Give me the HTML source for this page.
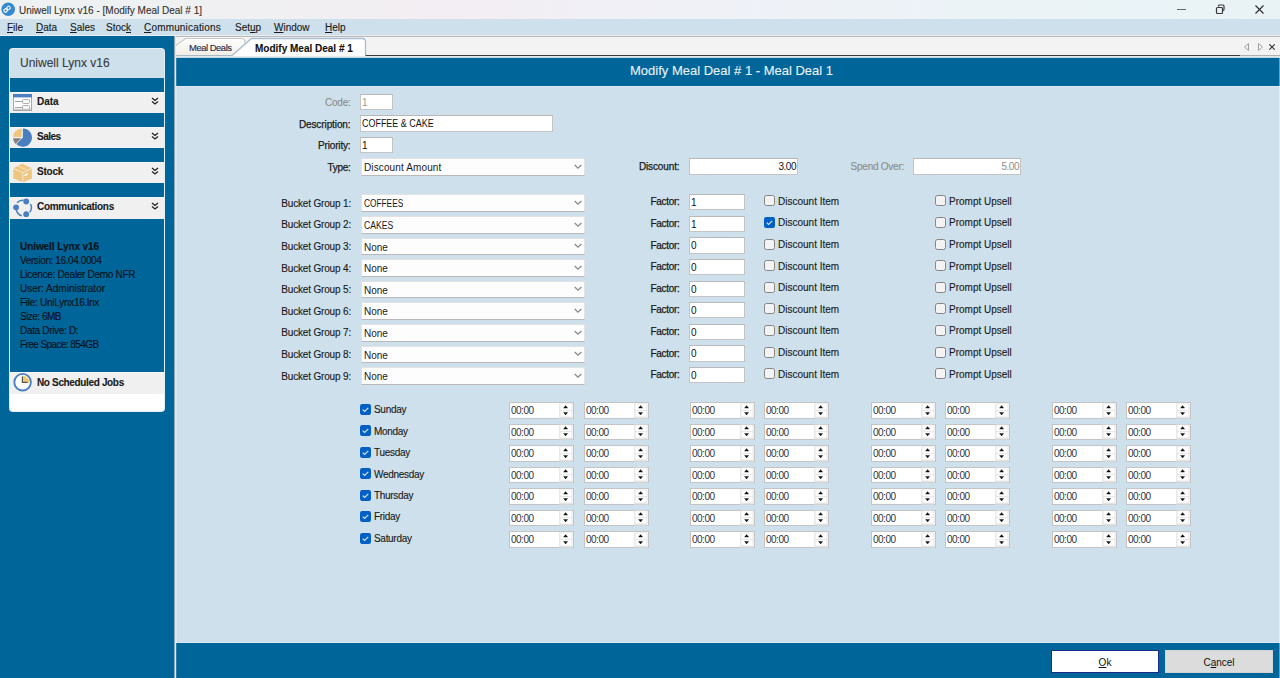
<!DOCTYPE html>
<html><head><meta charset="utf-8">
<style>
*{box-sizing:border-box;margin:0;padding:0}
html,body{width:1280px;height:678px;overflow:hidden;background:#006699;font-family:"Liberation Sans",sans-serif;font-size:10px;color:#1a1a1a}
.a{position:absolute}
.t{position:absolute;white-space:nowrap;line-height:12px;-webkit-text-stroke:0.12px currentColor}
#title{left:0;top:0;width:1280px;height:19px;background:linear-gradient(90deg,#edf2f1 0%,#f1eff2 25%,#f3eef3 35%,#eff1f7 55%,#ebf3f7 80%,#e9f3f6 100%)}
#menu{left:0;top:19px;width:1280px;height:17px;background:#cde0eb;border-bottom:1px solid #e6eef3}
.u{text-decoration:underline;text-underline-offset:1px}
#side{left:0;top:36px;width:175px;height:642px;background:#006699}
#main{left:176px;top:36px;width:1104px;height:642px;background:#cde0eb}
.b{font-weight:bold}
.hd{position:absolute;left:0;width:155px;height:21px;background:#f0f0f0;border-top:1px solid #f7f5f3}
.info{position:absolute;white-space:nowrap;line-height:14.05px;color:#08121c;font-size:10px;letter-spacing:-0.38px;-webkit-text-stroke:0.15px #08121c}
.info .b{letter-spacing:-0.1px}
.lr{text-align:right}
.sx{display:inline-block;transform-origin:0 50%}
.sb{-webkit-text-stroke:0.25px currentColor}
.tb{position:absolute;background:#fff;border:1px solid #c4c4c4;border-top-color:#b8b8b8;white-space:nowrap;overflow:hidden;line-height:16px;padding:0 1px}
.cb{position:absolute;background:#fdfdfd;border:1px solid #e2e2e2;border-bottom:1px solid #b9b9b9;white-space:nowrap;line-height:17.5px;padding:0 2px}
.sp{position:absolute;width:65px;height:16.5px;background:#fff;border:1px solid #c4c4c4;line-height:15.6px;padding-left:1px;color:#2c3440;letter-spacing:-0.5px}
.sb1{position:absolute;left:50px;top:0.5px;width:13px;height:7px;background:#f0f0f0}
.sb2{position:absolute;left:50px;top:7.5px;width:13px;height:7px;background:#f0f0f0}
.btn{position:absolute;text-align:center;line-height:23px;color:#111}
.btn u{text-underline-offset:1px}
</style></head><body>
<div id="title" class="a">
  <svg class="a" style="left:1px;top:2px" width="15" height="15" viewBox="0 0 15 15">
    <circle cx="7.2" cy="7.3" r="6.8" fill="#3489d2"/>
    <g fill="none" stroke="#fff" stroke-width="1.1">
      <rect x="3" y="7" width="3.2" height="3" rx="1" transform="rotate(-40 4.6 8.5)"/>
      <rect x="6" y="4.4" width="3.2" height="3" rx="1" transform="rotate(-40 7.6 5.9)"/>
    </g>
  </svg>
  <div class="t" style="left:19px;top:5px;font-size:10px;color:#333">Uniwell Lynx v16 - [Modify Meal Deal # 1]</div>
  <div class="a" style="left:1177px;top:8.5px;width:8.5px;height:1.4px;background:#6b6b6b"></div>
  <svg class="a" style="left:1215px;top:4px" width="10" height="10" viewBox="0 0 10 10">
    <rect x="1.5" y="3.5" width="6" height="6" rx="1" fill="none" stroke="#3a3a3a" stroke-width="1.2"/>
    <path d="M3.5 2.5 V2 a1 1 0 0 1 1 -1 H8 a1 1 0 0 1 1 1 V5.5 a1 1 0 0 1 -1 1 h-.5" fill="none" stroke="#3a3a3a" stroke-width="1.2"/>
  </svg>
  <svg class="a" style="left:1255px;top:5px" width="9" height="9" viewBox="0 0 9 9">
    <path d="M0.5 0.5 L8.5 8.5 M8.5 0.5 L0.5 8.5" stroke="#2a2a2a" stroke-width="1.1"/>
  </svg>
</div>
<div id="menu" class="a">
  <div class="t" style="left:7px;top:3px"><span class="u">F</span>ile</div>
  <div class="t" style="left:36px;top:3px"><span class="u">D</span>ata</div>
  <div class="t" style="left:70px;top:3px"><span class="u">S</span>ales</div>
  <div class="t" style="left:106px;top:3px">Stoc<span class="u">k</span></div>
  <div class="t" style="left:144px;top:3px;letter-spacing:0.17px"><span class="u">C</span>ommunications</div>
  <div class="t" style="left:235px;top:3px">Set<span class="u">u</span>p</div>
  <div class="t" style="left:274px;top:3px"><span class="u">W</span>indow</div>
  <div class="t" style="left:325px;top:3px"><span class="u">H</span>elp</div>
</div>
<div id="side" class="a">
 <div class="a" style="left:9px;top:12px;width:156px;height:364px;background:#e3eef5;border-radius:4px"></div>
 <div class="a" style="left:10px;top:13px;width:154px;height:362px;background:#fff;border-radius:3px;overflow:hidden">
  <div class="a" style="left:0;top:0;width:155px;height:29px;background:#cde0eb"></div>
  <div class="t" style="left:10px;top:7px;font-size:12px;line-height:14px;color:#3c3c3c">Uniwell Lynx v16</div>
  <div class="a" style="left:0;top:29px;width:155px;height:14px;background:#006699"></div>
  <div class="hd" style="top:43px"></div>
  <div class="a" style="left:0;top:64px;width:155px;height:14px;background:#006699"></div>
  <div class="hd" style="top:78px"></div>
  <div class="a" style="left:0;top:99px;width:155px;height:14px;background:#006699"></div>
  <div class="hd" style="top:113px"></div>
  <div class="a" style="left:0;top:134px;width:155px;height:14px;background:#006699"></div>
  <div class="hd" style="top:148px;height:22px"></div>
  <div class="a" style="left:0;top:170px;width:155px;height:153px;background:#006699"></div>
  <div class="hd" style="top:323px;height:21.5px"></div>
 </div>
 <div class="t b" style="left:37px;top:60px">Data</div>
 <div class="t b" style="left:37px;top:95px;letter-spacing:-0.5px">Sales</div>
 <div class="t b" style="left:37px;top:130px;letter-spacing:-0.2px">Stock</div>
 <div class="t b" style="left:37px;top:165px;letter-spacing:-0.3px">Communications</div>
 <div class="t b" style="left:37px;top:340.5px;letter-spacing:-0.35px">No Scheduled Jobs</div>
 <svg class="a chev" style="left:151px;top:61px" width="8" height="8" viewBox="0 0 8 8"><path d="M1 1 L4 3.5 L7 1 M1 4.5 L4 7 L7 4.5" fill="none" stroke="#222" stroke-width="1.3"/></svg>
 <svg class="a chev" style="left:151px;top:96px" width="8" height="8" viewBox="0 0 8 8"><path d="M1 1 L4 3.5 L7 1 M1 4.5 L4 7 L7 4.5" fill="none" stroke="#222" stroke-width="1.3"/></svg>
 <svg class="a chev" style="left:151px;top:131px" width="8" height="8" viewBox="0 0 8 8"><path d="M1 1 L4 3.5 L7 1 M1 4.5 L4 7 L7 4.5" fill="none" stroke="#222" stroke-width="1.3"/></svg>
 <svg class="a chev" style="left:151px;top:166px" width="8" height="8" viewBox="0 0 8 8"><path d="M1 1 L4 3.5 L7 1 M1 4.5 L4 7 L7 4.5" fill="none" stroke="#222" stroke-width="1.3"/></svg>
 <!-- data icon -->
 <svg class="a" style="left:13px;top:58px" width="19" height="17" viewBox="0 0 19 17">
  <rect x="0.5" y="0.5" width="18" height="16" fill="#fff" stroke="#a8a8a8"/>
  <rect x="0" y="0" width="19" height="3.4" fill="#4a7fc0"/>
  <path d="M2 7.5 H9 M2 13.5 H9" stroke="#9c9c9c" stroke-width="0.9"/>
  <rect x="9.5" y="5.6" width="7" height="3.8" rx="1" fill="#fff" stroke="#a8a8a8"/>
  <rect x="9.5" y="11.6" width="7" height="3.8" rx="1" fill="#fff" stroke="#a8a8a8"/>
  <rect x="1" y="14.8" width="17" height="1.2" fill="#c4c4c4"/>
 </svg>
 <!-- sales pie -->
 <svg class="a" style="left:12px;top:91px" width="21" height="21" viewBox="0 0 21 21">
  <path d="M10.9 1.5 A9.1 9.1 0 1 1 4.4 17.0 L10.9 10.6 Z" fill="#4a7fbf"/>
  <path d="M9.4 11.2 H1.1 A8.4 8.4 0 0 0 3.5 16.9 Z" fill="#808080"/>
  <path d="M9.7 10.1 V1.5 A8.6 8.6 0 0 0 1.1 10.1 Z" fill="#eec77a"/>
 </svg>
 <!-- stock box -->
 <svg class="a" style="left:13px;top:127px" width="20" height="20" viewBox="0 0 20 20">
  <path d="M0.4 5.2 L9.2 0.8 L18.8 5.2 L9.8 9.2 Z" fill="#efc680"/>
  <path d="M0.3 6 L9.4 9.8 V19.2 L0.3 15.2 Z" fill="#efc680"/>
  <path d="M10.2 9.8 L18.9 6 V15.6 L10.2 19.6 Z" fill="#efc680"/>
  <path d="M4.6 2.9 L14.2 7.2" stroke="#f7e4c2" stroke-width="0.9"/>
  <path d="M11.6 11.2 L14.6 9.9 V11.9 L11.6 13.2 Z" fill="#fff"/>
 </svg>
 <!-- comms -->
 <svg class="a" style="left:13px;top:162px" width="20" height="20" viewBox="0 0 20 20">
  <g fill="none" stroke="#4a7fbf" stroke-width="1.5">
   <path d="M4.0 4.8 A8 8 0 0 1 10.5 2.3"/>
   <path d="M17.5 6 A8 8 0 0 1 16.7 14.4"/>
   <path d="M3.3 12 A8 8 0 0 0 8.8 17.8"/>
  </g>
  <g fill="#4a7fbf"><circle cx="13.2" cy="3.5" r="2.9"/><circle cx="3.1" cy="9.3" r="2.9"/><circle cx="13.2" cy="16.2" r="2.9"/></g>
 </svg>
 <!-- clock -->
 <svg class="a" style="left:13px;top:336px" width="20" height="20" viewBox="0 0 20 20">
  <circle cx="9.6" cy="10.2" r="8.3" fill="#fff" stroke="#4a80c0" stroke-width="1.9"/>
  <path d="M9.4 3.8 A6.9 6.9 0 0 1 16.4 10.8 H9.4 Z" fill="#f3c96f"/>
  <path d="M9.4 4.5 V10.4 H14.6" fill="none" stroke="#555" stroke-width="1.2"/>
 </svg>
 <div class="info" style="left:20px;top:204px">
  <div class="b" style="letter-spacing:-0.07px">Uniwell Lynx v16</div>
  <div style="letter-spacing:-0.4px">Version: 16.04.0004</div>
  <div style="letter-spacing:-0.29px">Licence: Dealer Demo NFR</div>
  <div style="letter-spacing:0px">User: Administrator</div>
  <div style="letter-spacing:-0.27px">File: UniLynx16.lnx</div>
  <div style="letter-spacing:-0.52px">Size: 6MB</div>
  <div style="letter-spacing:-0.32px">Data Drive: D:</div>
  <div style="letter-spacing:-0.58px">Free Space: 854GB</div>
 </div>
 <div class="a" style="left:174px;top:0;width:1px;height:642px;background:#93a5b1"></div><div class="a" style="left:175px;top:0;width:1px;height:642px;background:#e4e7e9"></div>
</div>
<!--MAIN-->
<div id="mainc" class="a" style="left:0;top:0;width:1280px;height:678px">
<div class="a" style="left:176px;top:36px;width:1104px;height:1px;background:#b9b9b9"></div>
<div class="a" style="left:176px;top:37px;width:1104px;height:19px;background:#f3f3f3"></div>
<svg class="a" style="left:176px;top:36px" width="1104" height="22" viewBox="0 0 1104 22">
 <defs><linearGradient id="ig" x1="0" y1="0" x2="0" y2="1"><stop offset="0" stop-color="#ffffff"/><stop offset="1" stop-color="#f1eee3"/></linearGradient></defs>
 <path d="M-1 19.5 V10 L9.5 2.5 H65 Q69 2.5 69 6.5 V19.5 Z" fill="url(#ig)" stroke="#c9c9c9" stroke-width="1.2"/>
 <path d="M56 20 L75.5 2.5 H186 Q189.5 2.5 189.5 6 V20 Z" fill="#fff" stroke="none"/><path d="M56 19.5 L75.5 2.5 H186 Q189.5 2.5 189.5 6 V19.5" fill="none" stroke="#a9bdd1" stroke-width="1.3"/>
 <path d="M0 19.5 H56" stroke="#a9b9c8" stroke-width="1"/>
 <path d="M189.5 19.5 H1064" stroke="#3a3a3a" stroke-width="1"/>
 <path d="M1064 19.5 H1104" stroke="#b0b0b0" stroke-width="1"/>
 <path d="M1072.5 7.5 L1068.5 11 L1072.5 14.5 Z" fill="none" stroke="#999" stroke-width="0.9"/>
 <path d="M1082.5 7.5 L1086.5 11 L1082.5 14.5 Z" fill="none" stroke="#999" stroke-width="0.9"/>
 <path d="M1093.3 8.3 L1098.7 13.7 M1098.7 8.3 L1093.3 13.7" stroke="#333" stroke-width="1.2"/>
</svg>
<div class="t" style="left:189px;top:42px;font-size:9.5px;letter-spacing:-0.5px;color:#1e2a44">Meal Deals</div>
<div class="t b" style="left:255px;top:43px;font-size:10px;color:#111">Modify Meal Deal # 1</div>
<div class="a" style="left:176px;top:56px;width:1104px;height:1px;background:#e2e8ec"></div>
<div class="a" style="left:176px;top:57px;width:1104px;height:1px;background:#c4d9e6"></div>
<div class="a" style="left:176px;top:58px;width:1103px;height:28px;background:#006699"></div>
<div class="t" style="left:630px;top:63px;font-size:13px;line-height:16px;color:#e8f0f6">Modify Meal Deal # 1 - Meal Deal 1</div>
<div class="a" style="left:176px;top:86px;width:1104px;height:557px;background:#cde0eb"></div>
<div class="a" style="left:176px;top:642px;width:1104px;height:1px;background:#dce8f0"></div>
<div class="a" style="left:176px;top:643px;width:1104px;height:35px;background:#006699"></div>
<div class="btn" style="left:1051px;top:650px;width:108px;height:23px;background:#fff;border:1.5px solid #1a2a8a"><span><u>O</u>k</span></div>
<div class="btn" style="left:1165px;top:650px;width:108px;height:23px;background:#dcdcdc;border:1px solid #d4d4d4"><span>C<u>a</u>ncel</span></div>
<div class="t lr " style="left:50.5px;width:300px;top:96.7px;color:#8c8c8c;letter-spacing:-0.25px">Code:</div>
<div class="tb" style="left:360px;top:94.0px;width:33px;height:16px;text-align:left;color:#9a9a9a"><span>1</span></div>
<div class="t lr sb" style="left:50.5px;width:300px;top:118.7px;letter-spacing:-0.1px">Description:</div>
<div class="tb" style="left:360px;top:115.0px;width:193px;height:17px;text-align:left;color:#111"><span><span class="sx" style="transform:scaleX(0.895)">COFFEE &amp; CAKE</span></span></div>
<div class="t lr sb" style="left:50.5px;width:300px;top:139.7px;letter-spacing:-0.15px">Priority:</div>
<div class="tb" style="left:360px;top:136.5px;width:33px;height:16.5px;text-align:left;color:#111"><span>1</span></div>
<div class="t lr sb" style="left:50.5px;width:300px;top:161.9px;letter-spacing:-0.3px">Type:</div>
<div class="cb" style="left:361px;top:158.3px;width:224px;height:18px"><span><span style="letter-spacing:0.12px">Discount Amount</span></span><svg class="a" style="right:2px;top:4.7px" width="9" height="6" viewBox="0 0 9 6"><path d="M1.7 1 L5 4.2 L8.4 1" fill="none" stroke="#8a8a8a" stroke-width="1.3"/></svg></div>
<div class="t lr sb" style="left:379.5px;width:300px;top:160.7px;letter-spacing:-0.12px">Discount:</div>
<div class="tb" style="left:689px;top:158.0px;width:109px;height:17px;text-align:right;color:#111"><span><span style="letter-spacing:-0.5px">3.00</span></span></div>
<div class="t lr " style="left:604px;width:300px;top:160.7px;color:#8c8c8c;letter-spacing:-0.25px">Spend Over:</div>
<div class="tb" style="left:913px;top:158.0px;width:108px;height:17px;text-align:right;color:#8c8c8c"><span><span style="letter-spacing:-0.5px">5.00</span></span></div>
<div class="t lr " style="left:51px;width:300px;top:197.7px;letter-spacing:-0.17px">Bucket Group 1:</div>
<div class="cb" style="left:361px;top:194.4px;width:224px;height:17.7px"><span><span class="sx" style="transform:scaleX(0.83)">COFFEES</span></span><svg class="a" style="right:2px;top:4.5px" width="9" height="6" viewBox="0 0 9 6"><path d="M1.7 1 L5 4.2 L8.4 1" fill="none" stroke="#8a8a8a" stroke-width="1.3"/></svg></div>
<div class="t lr sb" style="left:379.5px;width:300px;top:196.4px;letter-spacing:-0.3px">Factor:</div>
<div class="tb" style="left:689px;top:194.2px;width:56px;height:16.2px;text-align:left;color:#111"><span>1</span></div>
<svg class="a" style="left:764px;top:195.3px" width="11" height="11" viewBox="0 0 11 11"><rect x="0.5" y="0.5" width="10" height="10" rx="2" fill="#f3f3f3" stroke="#858585" stroke-width="1"/></svg>
<div class="t " style="left:778px;top:195.8px;">Discount Item</div>
<svg class="a" style="left:935px;top:195.3px" width="11" height="11" viewBox="0 0 11 11"><rect x="0.5" y="0.5" width="10" height="10" rx="2" fill="#f3f3f3" stroke="#858585" stroke-width="1"/></svg>
<div class="t " style="left:949px;top:195.8px;">Prompt Upsell</div>
<div class="t lr " style="left:51px;width:300px;top:219.3px;letter-spacing:-0.17px">Bucket Group 2:</div>
<div class="cb" style="left:361px;top:216.0px;width:224px;height:17.7px"><span><span class="sx" style="transform:scaleX(0.86)">CAKES</span></span><svg class="a" style="right:2px;top:4.5px" width="9" height="6" viewBox="0 0 9 6"><path d="M1.7 1 L5 4.2 L8.4 1" fill="none" stroke="#8a8a8a" stroke-width="1.3"/></svg></div>
<div class="t lr sb" style="left:379.5px;width:300px;top:218.0px;letter-spacing:-0.3px">Factor:</div>
<div class="tb" style="left:689px;top:215.8px;width:56px;height:16.2px;text-align:left;color:#111"><span>1</span></div>
<svg class="a" style="left:764px;top:216.9px" width="11" height="11" viewBox="0 0 11 11"><rect x="0" y="0" width="11" height="11" rx="2.2" fill="#005fc4"/><path d="M2.7 5.6 L4.6 7.5 L8.3 3.8" fill="none" stroke="#d6e4f4" stroke-width="1.2"/></svg>
<div class="t " style="left:778px;top:217.4px;">Discount Item</div>
<svg class="a" style="left:935px;top:216.9px" width="11" height="11" viewBox="0 0 11 11"><rect x="0.5" y="0.5" width="10" height="10" rx="2" fill="#f3f3f3" stroke="#858585" stroke-width="1"/></svg>
<div class="t " style="left:949px;top:217.4px;">Prompt Upsell</div>
<div class="t lr " style="left:51px;width:300px;top:240.9px;letter-spacing:-0.17px">Bucket Group 3:</div>
<div class="cb" style="left:361px;top:237.6px;width:224px;height:17.7px"><span>None</span><svg class="a" style="right:2px;top:4.5px" width="9" height="6" viewBox="0 0 9 6"><path d="M1.7 1 L5 4.2 L8.4 1" fill="none" stroke="#8a8a8a" stroke-width="1.3"/></svg></div>
<div class="t lr sb" style="left:379.5px;width:300px;top:239.6px;letter-spacing:-0.3px">Factor:</div>
<div class="tb" style="left:689px;top:237.4px;width:56px;height:16.2px;text-align:left;color:#111"><span>0</span></div>
<svg class="a" style="left:764px;top:238.5px" width="11" height="11" viewBox="0 0 11 11"><rect x="0.5" y="0.5" width="10" height="10" rx="2" fill="#f3f3f3" stroke="#858585" stroke-width="1"/></svg>
<div class="t " style="left:778px;top:239.0px;">Discount Item</div>
<svg class="a" style="left:935px;top:238.5px" width="11" height="11" viewBox="0 0 11 11"><rect x="0.5" y="0.5" width="10" height="10" rx="2" fill="#f3f3f3" stroke="#858585" stroke-width="1"/></svg>
<div class="t " style="left:949px;top:239.0px;">Prompt Upsell</div>
<div class="t lr " style="left:51px;width:300px;top:262.5px;letter-spacing:-0.17px">Bucket Group 4:</div>
<div class="cb" style="left:361px;top:259.2px;width:224px;height:17.7px"><span>None</span><svg class="a" style="right:2px;top:4.5px" width="9" height="6" viewBox="0 0 9 6"><path d="M1.7 1 L5 4.2 L8.4 1" fill="none" stroke="#8a8a8a" stroke-width="1.3"/></svg></div>
<div class="t lr sb" style="left:379.5px;width:300px;top:261.2px;letter-spacing:-0.3px">Factor:</div>
<div class="tb" style="left:689px;top:259.0px;width:56px;height:16.2px;text-align:left;color:#111"><span>0</span></div>
<svg class="a" style="left:764px;top:260.1px" width="11" height="11" viewBox="0 0 11 11"><rect x="0.5" y="0.5" width="10" height="10" rx="2" fill="#f3f3f3" stroke="#858585" stroke-width="1"/></svg>
<div class="t " style="left:778px;top:260.6px;">Discount Item</div>
<svg class="a" style="left:935px;top:260.1px" width="11" height="11" viewBox="0 0 11 11"><rect x="0.5" y="0.5" width="10" height="10" rx="2" fill="#f3f3f3" stroke="#858585" stroke-width="1"/></svg>
<div class="t " style="left:949px;top:260.6px;">Prompt Upsell</div>
<div class="t lr " style="left:51px;width:300px;top:284.1px;letter-spacing:-0.17px">Bucket Group 5:</div>
<div class="cb" style="left:361px;top:280.8px;width:224px;height:17.7px"><span>None</span><svg class="a" style="right:2px;top:4.5px" width="9" height="6" viewBox="0 0 9 6"><path d="M1.7 1 L5 4.2 L8.4 1" fill="none" stroke="#8a8a8a" stroke-width="1.3"/></svg></div>
<div class="t lr sb" style="left:379.5px;width:300px;top:282.8px;letter-spacing:-0.3px">Factor:</div>
<div class="tb" style="left:689px;top:280.6px;width:56px;height:16.2px;text-align:left;color:#111"><span>0</span></div>
<svg class="a" style="left:764px;top:281.7px" width="11" height="11" viewBox="0 0 11 11"><rect x="0.5" y="0.5" width="10" height="10" rx="2" fill="#f3f3f3" stroke="#858585" stroke-width="1"/></svg>
<div class="t " style="left:778px;top:282.2px;">Discount Item</div>
<svg class="a" style="left:935px;top:281.7px" width="11" height="11" viewBox="0 0 11 11"><rect x="0.5" y="0.5" width="10" height="10" rx="2" fill="#f3f3f3" stroke="#858585" stroke-width="1"/></svg>
<div class="t " style="left:949px;top:282.2px;">Prompt Upsell</div>
<div class="t lr " style="left:51px;width:300px;top:305.7px;letter-spacing:-0.17px">Bucket Group 6:</div>
<div class="cb" style="left:361px;top:302.4px;width:224px;height:17.7px"><span>None</span><svg class="a" style="right:2px;top:4.5px" width="9" height="6" viewBox="0 0 9 6"><path d="M1.7 1 L5 4.2 L8.4 1" fill="none" stroke="#8a8a8a" stroke-width="1.3"/></svg></div>
<div class="t lr sb" style="left:379.5px;width:300px;top:304.4px;letter-spacing:-0.3px">Factor:</div>
<div class="tb" style="left:689px;top:302.2px;width:56px;height:16.2px;text-align:left;color:#111"><span>0</span></div>
<svg class="a" style="left:764px;top:303.3px" width="11" height="11" viewBox="0 0 11 11"><rect x="0.5" y="0.5" width="10" height="10" rx="2" fill="#f3f3f3" stroke="#858585" stroke-width="1"/></svg>
<div class="t " style="left:778px;top:303.8px;">Discount Item</div>
<svg class="a" style="left:935px;top:303.3px" width="11" height="11" viewBox="0 0 11 11"><rect x="0.5" y="0.5" width="10" height="10" rx="2" fill="#f3f3f3" stroke="#858585" stroke-width="1"/></svg>
<div class="t " style="left:949px;top:303.8px;">Prompt Upsell</div>
<div class="t lr " style="left:51px;width:300px;top:327.3px;letter-spacing:-0.17px">Bucket Group 7:</div>
<div class="cb" style="left:361px;top:324.0px;width:224px;height:17.7px"><span>None</span><svg class="a" style="right:2px;top:4.5px" width="9" height="6" viewBox="0 0 9 6"><path d="M1.7 1 L5 4.2 L8.4 1" fill="none" stroke="#8a8a8a" stroke-width="1.3"/></svg></div>
<div class="t lr sb" style="left:379.5px;width:300px;top:326.0px;letter-spacing:-0.3px">Factor:</div>
<div class="tb" style="left:689px;top:323.8px;width:56px;height:16.2px;text-align:left;color:#111"><span>0</span></div>
<svg class="a" style="left:764px;top:324.9px" width="11" height="11" viewBox="0 0 11 11"><rect x="0.5" y="0.5" width="10" height="10" rx="2" fill="#f3f3f3" stroke="#858585" stroke-width="1"/></svg>
<div class="t " style="left:778px;top:325.4px;">Discount Item</div>
<svg class="a" style="left:935px;top:324.9px" width="11" height="11" viewBox="0 0 11 11"><rect x="0.5" y="0.5" width="10" height="10" rx="2" fill="#f3f3f3" stroke="#858585" stroke-width="1"/></svg>
<div class="t " style="left:949px;top:325.4px;">Prompt Upsell</div>
<div class="t lr " style="left:51px;width:300px;top:348.9px;letter-spacing:-0.17px">Bucket Group 8:</div>
<div class="cb" style="left:361px;top:345.6px;width:224px;height:17.7px"><span>None</span><svg class="a" style="right:2px;top:4.5px" width="9" height="6" viewBox="0 0 9 6"><path d="M1.7 1 L5 4.2 L8.4 1" fill="none" stroke="#8a8a8a" stroke-width="1.3"/></svg></div>
<div class="t lr sb" style="left:379.5px;width:300px;top:347.6px;letter-spacing:-0.3px">Factor:</div>
<div class="tb" style="left:689px;top:345.4px;width:56px;height:16.2px;text-align:left;color:#111"><span>0</span></div>
<svg class="a" style="left:764px;top:346.5px" width="11" height="11" viewBox="0 0 11 11"><rect x="0.5" y="0.5" width="10" height="10" rx="2" fill="#f3f3f3" stroke="#858585" stroke-width="1"/></svg>
<div class="t " style="left:778px;top:347.0px;">Discount Item</div>
<svg class="a" style="left:935px;top:346.5px" width="11" height="11" viewBox="0 0 11 11"><rect x="0.5" y="0.5" width="10" height="10" rx="2" fill="#f3f3f3" stroke="#858585" stroke-width="1"/></svg>
<div class="t " style="left:949px;top:347.0px;">Prompt Upsell</div>
<div class="t lr " style="left:51px;width:300px;top:370.5px;letter-spacing:-0.17px">Bucket Group 9:</div>
<div class="cb" style="left:361px;top:367.2px;width:224px;height:17.7px"><span>None</span><svg class="a" style="right:2px;top:4.5px" width="9" height="6" viewBox="0 0 9 6"><path d="M1.7 1 L5 4.2 L8.4 1" fill="none" stroke="#8a8a8a" stroke-width="1.3"/></svg></div>
<div class="t lr sb" style="left:379.5px;width:300px;top:369.2px;letter-spacing:-0.3px">Factor:</div>
<div class="tb" style="left:689px;top:367.0px;width:56px;height:16.2px;text-align:left;color:#111"><span>0</span></div>
<svg class="a" style="left:764px;top:368.1px" width="11" height="11" viewBox="0 0 11 11"><rect x="0.5" y="0.5" width="10" height="10" rx="2" fill="#f3f3f3" stroke="#858585" stroke-width="1"/></svg>
<div class="t " style="left:778px;top:368.6px;">Discount Item</div>
<svg class="a" style="left:935px;top:368.1px" width="11" height="11" viewBox="0 0 11 11"><rect x="0.5" y="0.5" width="10" height="10" rx="2" fill="#f3f3f3" stroke="#858585" stroke-width="1"/></svg>
<div class="t " style="left:949px;top:368.6px;">Prompt Upsell</div>
<svg class="a" style="left:360px;top:403.8px" width="11" height="11" viewBox="0 0 11 11"><rect x="0" y="0" width="11" height="11" rx="2.2" fill="#005fc4"/><path d="M2.7 5.6 L4.6 7.5 L8.3 3.8" fill="none" stroke="#d6e4f4" stroke-width="1.2"/></svg>
<div class="t " style="left:374px;top:404.2px;letter-spacing:-0.3px">Sunday</div>
<div class="sp" style="left:509px;top:402.4px"><span>00:00</span><svg class="a" style="left:49px;top:-0.5px" width="14" height="16" viewBox="0 0 14 16"><rect x="0.2" y="0.5" width="13.3" height="15" fill="#e4e4e4"/><rect x="1.5" y="1.2" width="11" height="6" fill="#fff"/><rect x="1.5" y="8.2" width="11" height="5.4" fill="#fff"/><path d="M4.6 5.1 L6.6 2.6 L8.6 5.1 Z M4.6 9.5 L6.6 12 L8.6 9.5 Z" fill="#111" stroke="#111" stroke-width="0.4" stroke-linejoin="round"/></svg></div>
<div class="sp" style="left:584px;top:402.4px"><span>00:00</span><svg class="a" style="left:49px;top:-0.5px" width="14" height="16" viewBox="0 0 14 16"><rect x="0.2" y="0.5" width="13.3" height="15" fill="#e4e4e4"/><rect x="1.5" y="1.2" width="11" height="6" fill="#fff"/><rect x="1.5" y="8.2" width="11" height="5.4" fill="#fff"/><path d="M4.6 5.1 L6.6 2.6 L8.6 5.1 Z M4.6 9.5 L6.6 12 L8.6 9.5 Z" fill="#111" stroke="#111" stroke-width="0.4" stroke-linejoin="round"/></svg></div>
<div class="sp" style="left:690px;top:402.4px"><span>00:00</span><svg class="a" style="left:49px;top:-0.5px" width="14" height="16" viewBox="0 0 14 16"><rect x="0.2" y="0.5" width="13.3" height="15" fill="#e4e4e4"/><rect x="1.5" y="1.2" width="11" height="6" fill="#fff"/><rect x="1.5" y="8.2" width="11" height="5.4" fill="#fff"/><path d="M4.6 5.1 L6.6 2.6 L8.6 5.1 Z M4.6 9.5 L6.6 12 L8.6 9.5 Z" fill="#111" stroke="#111" stroke-width="0.4" stroke-linejoin="round"/></svg></div>
<div class="sp" style="left:764px;top:402.4px"><span>00:00</span><svg class="a" style="left:49px;top:-0.5px" width="14" height="16" viewBox="0 0 14 16"><rect x="0.2" y="0.5" width="13.3" height="15" fill="#e4e4e4"/><rect x="1.5" y="1.2" width="11" height="6" fill="#fff"/><rect x="1.5" y="8.2" width="11" height="5.4" fill="#fff"/><path d="M4.6 5.1 L6.6 2.6 L8.6 5.1 Z M4.6 9.5 L6.6 12 L8.6 9.5 Z" fill="#111" stroke="#111" stroke-width="0.4" stroke-linejoin="round"/></svg></div>
<div class="sp" style="left:871px;top:402.4px"><span>00:00</span><svg class="a" style="left:49px;top:-0.5px" width="14" height="16" viewBox="0 0 14 16"><rect x="0.2" y="0.5" width="13.3" height="15" fill="#e4e4e4"/><rect x="1.5" y="1.2" width="11" height="6" fill="#fff"/><rect x="1.5" y="8.2" width="11" height="5.4" fill="#fff"/><path d="M4.6 5.1 L6.6 2.6 L8.6 5.1 Z M4.6 9.5 L6.6 12 L8.6 9.5 Z" fill="#111" stroke="#111" stroke-width="0.4" stroke-linejoin="round"/></svg></div>
<div class="sp" style="left:945px;top:402.4px"><span>00:00</span><svg class="a" style="left:49px;top:-0.5px" width="14" height="16" viewBox="0 0 14 16"><rect x="0.2" y="0.5" width="13.3" height="15" fill="#e4e4e4"/><rect x="1.5" y="1.2" width="11" height="6" fill="#fff"/><rect x="1.5" y="8.2" width="11" height="5.4" fill="#fff"/><path d="M4.6 5.1 L6.6 2.6 L8.6 5.1 Z M4.6 9.5 L6.6 12 L8.6 9.5 Z" fill="#111" stroke="#111" stroke-width="0.4" stroke-linejoin="round"/></svg></div>
<div class="sp" style="left:1052px;top:402.4px"><span>00:00</span><svg class="a" style="left:49px;top:-0.5px" width="14" height="16" viewBox="0 0 14 16"><rect x="0.2" y="0.5" width="13.3" height="15" fill="#e4e4e4"/><rect x="1.5" y="1.2" width="11" height="6" fill="#fff"/><rect x="1.5" y="8.2" width="11" height="5.4" fill="#fff"/><path d="M4.6 5.1 L6.6 2.6 L8.6 5.1 Z M4.6 9.5 L6.6 12 L8.6 9.5 Z" fill="#111" stroke="#111" stroke-width="0.4" stroke-linejoin="round"/></svg></div>
<div class="sp" style="left:1126px;top:402.4px"><span>00:00</span><svg class="a" style="left:49px;top:-0.5px" width="14" height="16" viewBox="0 0 14 16"><rect x="0.2" y="0.5" width="13.3" height="15" fill="#e4e4e4"/><rect x="1.5" y="1.2" width="11" height="6" fill="#fff"/><rect x="1.5" y="8.2" width="11" height="5.4" fill="#fff"/><path d="M4.6 5.1 L6.6 2.6 L8.6 5.1 Z M4.6 9.5 L6.6 12 L8.6 9.5 Z" fill="#111" stroke="#111" stroke-width="0.4" stroke-linejoin="round"/></svg></div>
<svg class="a" style="left:360px;top:425.2px" width="11" height="11" viewBox="0 0 11 11"><rect x="0" y="0" width="11" height="11" rx="2.2" fill="#005fc4"/><path d="M2.7 5.6 L4.6 7.5 L8.3 3.8" fill="none" stroke="#d6e4f4" stroke-width="1.2"/></svg>
<div class="t " style="left:374px;top:425.6px;letter-spacing:-0.3px">Monday</div>
<div class="sp" style="left:509px;top:423.8px"><span>00:00</span><svg class="a" style="left:49px;top:-0.5px" width="14" height="16" viewBox="0 0 14 16"><rect x="0.2" y="0.5" width="13.3" height="15" fill="#e4e4e4"/><rect x="1.5" y="1.2" width="11" height="6" fill="#fff"/><rect x="1.5" y="8.2" width="11" height="5.4" fill="#fff"/><path d="M4.6 5.1 L6.6 2.6 L8.6 5.1 Z M4.6 9.5 L6.6 12 L8.6 9.5 Z" fill="#111" stroke="#111" stroke-width="0.4" stroke-linejoin="round"/></svg></div>
<div class="sp" style="left:584px;top:423.8px"><span>00:00</span><svg class="a" style="left:49px;top:-0.5px" width="14" height="16" viewBox="0 0 14 16"><rect x="0.2" y="0.5" width="13.3" height="15" fill="#e4e4e4"/><rect x="1.5" y="1.2" width="11" height="6" fill="#fff"/><rect x="1.5" y="8.2" width="11" height="5.4" fill="#fff"/><path d="M4.6 5.1 L6.6 2.6 L8.6 5.1 Z M4.6 9.5 L6.6 12 L8.6 9.5 Z" fill="#111" stroke="#111" stroke-width="0.4" stroke-linejoin="round"/></svg></div>
<div class="sp" style="left:690px;top:423.8px"><span>00:00</span><svg class="a" style="left:49px;top:-0.5px" width="14" height="16" viewBox="0 0 14 16"><rect x="0.2" y="0.5" width="13.3" height="15" fill="#e4e4e4"/><rect x="1.5" y="1.2" width="11" height="6" fill="#fff"/><rect x="1.5" y="8.2" width="11" height="5.4" fill="#fff"/><path d="M4.6 5.1 L6.6 2.6 L8.6 5.1 Z M4.6 9.5 L6.6 12 L8.6 9.5 Z" fill="#111" stroke="#111" stroke-width="0.4" stroke-linejoin="round"/></svg></div>
<div class="sp" style="left:764px;top:423.8px"><span>00:00</span><svg class="a" style="left:49px;top:-0.5px" width="14" height="16" viewBox="0 0 14 16"><rect x="0.2" y="0.5" width="13.3" height="15" fill="#e4e4e4"/><rect x="1.5" y="1.2" width="11" height="6" fill="#fff"/><rect x="1.5" y="8.2" width="11" height="5.4" fill="#fff"/><path d="M4.6 5.1 L6.6 2.6 L8.6 5.1 Z M4.6 9.5 L6.6 12 L8.6 9.5 Z" fill="#111" stroke="#111" stroke-width="0.4" stroke-linejoin="round"/></svg></div>
<div class="sp" style="left:871px;top:423.8px"><span>00:00</span><svg class="a" style="left:49px;top:-0.5px" width="14" height="16" viewBox="0 0 14 16"><rect x="0.2" y="0.5" width="13.3" height="15" fill="#e4e4e4"/><rect x="1.5" y="1.2" width="11" height="6" fill="#fff"/><rect x="1.5" y="8.2" width="11" height="5.4" fill="#fff"/><path d="M4.6 5.1 L6.6 2.6 L8.6 5.1 Z M4.6 9.5 L6.6 12 L8.6 9.5 Z" fill="#111" stroke="#111" stroke-width="0.4" stroke-linejoin="round"/></svg></div>
<div class="sp" style="left:945px;top:423.8px"><span>00:00</span><svg class="a" style="left:49px;top:-0.5px" width="14" height="16" viewBox="0 0 14 16"><rect x="0.2" y="0.5" width="13.3" height="15" fill="#e4e4e4"/><rect x="1.5" y="1.2" width="11" height="6" fill="#fff"/><rect x="1.5" y="8.2" width="11" height="5.4" fill="#fff"/><path d="M4.6 5.1 L6.6 2.6 L8.6 5.1 Z M4.6 9.5 L6.6 12 L8.6 9.5 Z" fill="#111" stroke="#111" stroke-width="0.4" stroke-linejoin="round"/></svg></div>
<div class="sp" style="left:1052px;top:423.8px"><span>00:00</span><svg class="a" style="left:49px;top:-0.5px" width="14" height="16" viewBox="0 0 14 16"><rect x="0.2" y="0.5" width="13.3" height="15" fill="#e4e4e4"/><rect x="1.5" y="1.2" width="11" height="6" fill="#fff"/><rect x="1.5" y="8.2" width="11" height="5.4" fill="#fff"/><path d="M4.6 5.1 L6.6 2.6 L8.6 5.1 Z M4.6 9.5 L6.6 12 L8.6 9.5 Z" fill="#111" stroke="#111" stroke-width="0.4" stroke-linejoin="round"/></svg></div>
<div class="sp" style="left:1126px;top:423.8px"><span>00:00</span><svg class="a" style="left:49px;top:-0.5px" width="14" height="16" viewBox="0 0 14 16"><rect x="0.2" y="0.5" width="13.3" height="15" fill="#e4e4e4"/><rect x="1.5" y="1.2" width="11" height="6" fill="#fff"/><rect x="1.5" y="8.2" width="11" height="5.4" fill="#fff"/><path d="M4.6 5.1 L6.6 2.6 L8.6 5.1 Z M4.6 9.5 L6.6 12 L8.6 9.5 Z" fill="#111" stroke="#111" stroke-width="0.4" stroke-linejoin="round"/></svg></div>
<svg class="a" style="left:360px;top:446.7px" width="11" height="11" viewBox="0 0 11 11"><rect x="0" y="0" width="11" height="11" rx="2.2" fill="#005fc4"/><path d="M2.7 5.6 L4.6 7.5 L8.3 3.8" fill="none" stroke="#d6e4f4" stroke-width="1.2"/></svg>
<div class="t " style="left:374px;top:447.1px;letter-spacing:-0.3px">Tuesday</div>
<div class="sp" style="left:509px;top:445.3px"><span>00:00</span><svg class="a" style="left:49px;top:-0.5px" width="14" height="16" viewBox="0 0 14 16"><rect x="0.2" y="0.5" width="13.3" height="15" fill="#e4e4e4"/><rect x="1.5" y="1.2" width="11" height="6" fill="#fff"/><rect x="1.5" y="8.2" width="11" height="5.4" fill="#fff"/><path d="M4.6 5.1 L6.6 2.6 L8.6 5.1 Z M4.6 9.5 L6.6 12 L8.6 9.5 Z" fill="#111" stroke="#111" stroke-width="0.4" stroke-linejoin="round"/></svg></div>
<div class="sp" style="left:584px;top:445.3px"><span>00:00</span><svg class="a" style="left:49px;top:-0.5px" width="14" height="16" viewBox="0 0 14 16"><rect x="0.2" y="0.5" width="13.3" height="15" fill="#e4e4e4"/><rect x="1.5" y="1.2" width="11" height="6" fill="#fff"/><rect x="1.5" y="8.2" width="11" height="5.4" fill="#fff"/><path d="M4.6 5.1 L6.6 2.6 L8.6 5.1 Z M4.6 9.5 L6.6 12 L8.6 9.5 Z" fill="#111" stroke="#111" stroke-width="0.4" stroke-linejoin="round"/></svg></div>
<div class="sp" style="left:690px;top:445.3px"><span>00:00</span><svg class="a" style="left:49px;top:-0.5px" width="14" height="16" viewBox="0 0 14 16"><rect x="0.2" y="0.5" width="13.3" height="15" fill="#e4e4e4"/><rect x="1.5" y="1.2" width="11" height="6" fill="#fff"/><rect x="1.5" y="8.2" width="11" height="5.4" fill="#fff"/><path d="M4.6 5.1 L6.6 2.6 L8.6 5.1 Z M4.6 9.5 L6.6 12 L8.6 9.5 Z" fill="#111" stroke="#111" stroke-width="0.4" stroke-linejoin="round"/></svg></div>
<div class="sp" style="left:764px;top:445.3px"><span>00:00</span><svg class="a" style="left:49px;top:-0.5px" width="14" height="16" viewBox="0 0 14 16"><rect x="0.2" y="0.5" width="13.3" height="15" fill="#e4e4e4"/><rect x="1.5" y="1.2" width="11" height="6" fill="#fff"/><rect x="1.5" y="8.2" width="11" height="5.4" fill="#fff"/><path d="M4.6 5.1 L6.6 2.6 L8.6 5.1 Z M4.6 9.5 L6.6 12 L8.6 9.5 Z" fill="#111" stroke="#111" stroke-width="0.4" stroke-linejoin="round"/></svg></div>
<div class="sp" style="left:871px;top:445.3px"><span>00:00</span><svg class="a" style="left:49px;top:-0.5px" width="14" height="16" viewBox="0 0 14 16"><rect x="0.2" y="0.5" width="13.3" height="15" fill="#e4e4e4"/><rect x="1.5" y="1.2" width="11" height="6" fill="#fff"/><rect x="1.5" y="8.2" width="11" height="5.4" fill="#fff"/><path d="M4.6 5.1 L6.6 2.6 L8.6 5.1 Z M4.6 9.5 L6.6 12 L8.6 9.5 Z" fill="#111" stroke="#111" stroke-width="0.4" stroke-linejoin="round"/></svg></div>
<div class="sp" style="left:945px;top:445.3px"><span>00:00</span><svg class="a" style="left:49px;top:-0.5px" width="14" height="16" viewBox="0 0 14 16"><rect x="0.2" y="0.5" width="13.3" height="15" fill="#e4e4e4"/><rect x="1.5" y="1.2" width="11" height="6" fill="#fff"/><rect x="1.5" y="8.2" width="11" height="5.4" fill="#fff"/><path d="M4.6 5.1 L6.6 2.6 L8.6 5.1 Z M4.6 9.5 L6.6 12 L8.6 9.5 Z" fill="#111" stroke="#111" stroke-width="0.4" stroke-linejoin="round"/></svg></div>
<div class="sp" style="left:1052px;top:445.3px"><span>00:00</span><svg class="a" style="left:49px;top:-0.5px" width="14" height="16" viewBox="0 0 14 16"><rect x="0.2" y="0.5" width="13.3" height="15" fill="#e4e4e4"/><rect x="1.5" y="1.2" width="11" height="6" fill="#fff"/><rect x="1.5" y="8.2" width="11" height="5.4" fill="#fff"/><path d="M4.6 5.1 L6.6 2.6 L8.6 5.1 Z M4.6 9.5 L6.6 12 L8.6 9.5 Z" fill="#111" stroke="#111" stroke-width="0.4" stroke-linejoin="round"/></svg></div>
<div class="sp" style="left:1126px;top:445.3px"><span>00:00</span><svg class="a" style="left:49px;top:-0.5px" width="14" height="16" viewBox="0 0 14 16"><rect x="0.2" y="0.5" width="13.3" height="15" fill="#e4e4e4"/><rect x="1.5" y="1.2" width="11" height="6" fill="#fff"/><rect x="1.5" y="8.2" width="11" height="5.4" fill="#fff"/><path d="M4.6 5.1 L6.6 2.6 L8.6 5.1 Z M4.6 9.5 L6.6 12 L8.6 9.5 Z" fill="#111" stroke="#111" stroke-width="0.4" stroke-linejoin="round"/></svg></div>
<svg class="a" style="left:360px;top:468.1px" width="11" height="11" viewBox="0 0 11 11"><rect x="0" y="0" width="11" height="11" rx="2.2" fill="#005fc4"/><path d="M2.7 5.6 L4.6 7.5 L8.3 3.8" fill="none" stroke="#d6e4f4" stroke-width="1.2"/></svg>
<div class="t " style="left:374px;top:468.6px;letter-spacing:-0.3px">Wednesday</div>
<div class="sp" style="left:509px;top:466.8px"><span>00:00</span><svg class="a" style="left:49px;top:-0.5px" width="14" height="16" viewBox="0 0 14 16"><rect x="0.2" y="0.5" width="13.3" height="15" fill="#e4e4e4"/><rect x="1.5" y="1.2" width="11" height="6" fill="#fff"/><rect x="1.5" y="8.2" width="11" height="5.4" fill="#fff"/><path d="M4.6 5.1 L6.6 2.6 L8.6 5.1 Z M4.6 9.5 L6.6 12 L8.6 9.5 Z" fill="#111" stroke="#111" stroke-width="0.4" stroke-linejoin="round"/></svg></div>
<div class="sp" style="left:584px;top:466.8px"><span>00:00</span><svg class="a" style="left:49px;top:-0.5px" width="14" height="16" viewBox="0 0 14 16"><rect x="0.2" y="0.5" width="13.3" height="15" fill="#e4e4e4"/><rect x="1.5" y="1.2" width="11" height="6" fill="#fff"/><rect x="1.5" y="8.2" width="11" height="5.4" fill="#fff"/><path d="M4.6 5.1 L6.6 2.6 L8.6 5.1 Z M4.6 9.5 L6.6 12 L8.6 9.5 Z" fill="#111" stroke="#111" stroke-width="0.4" stroke-linejoin="round"/></svg></div>
<div class="sp" style="left:690px;top:466.8px"><span>00:00</span><svg class="a" style="left:49px;top:-0.5px" width="14" height="16" viewBox="0 0 14 16"><rect x="0.2" y="0.5" width="13.3" height="15" fill="#e4e4e4"/><rect x="1.5" y="1.2" width="11" height="6" fill="#fff"/><rect x="1.5" y="8.2" width="11" height="5.4" fill="#fff"/><path d="M4.6 5.1 L6.6 2.6 L8.6 5.1 Z M4.6 9.5 L6.6 12 L8.6 9.5 Z" fill="#111" stroke="#111" stroke-width="0.4" stroke-linejoin="round"/></svg></div>
<div class="sp" style="left:764px;top:466.8px"><span>00:00</span><svg class="a" style="left:49px;top:-0.5px" width="14" height="16" viewBox="0 0 14 16"><rect x="0.2" y="0.5" width="13.3" height="15" fill="#e4e4e4"/><rect x="1.5" y="1.2" width="11" height="6" fill="#fff"/><rect x="1.5" y="8.2" width="11" height="5.4" fill="#fff"/><path d="M4.6 5.1 L6.6 2.6 L8.6 5.1 Z M4.6 9.5 L6.6 12 L8.6 9.5 Z" fill="#111" stroke="#111" stroke-width="0.4" stroke-linejoin="round"/></svg></div>
<div class="sp" style="left:871px;top:466.8px"><span>00:00</span><svg class="a" style="left:49px;top:-0.5px" width="14" height="16" viewBox="0 0 14 16"><rect x="0.2" y="0.5" width="13.3" height="15" fill="#e4e4e4"/><rect x="1.5" y="1.2" width="11" height="6" fill="#fff"/><rect x="1.5" y="8.2" width="11" height="5.4" fill="#fff"/><path d="M4.6 5.1 L6.6 2.6 L8.6 5.1 Z M4.6 9.5 L6.6 12 L8.6 9.5 Z" fill="#111" stroke="#111" stroke-width="0.4" stroke-linejoin="round"/></svg></div>
<div class="sp" style="left:945px;top:466.8px"><span>00:00</span><svg class="a" style="left:49px;top:-0.5px" width="14" height="16" viewBox="0 0 14 16"><rect x="0.2" y="0.5" width="13.3" height="15" fill="#e4e4e4"/><rect x="1.5" y="1.2" width="11" height="6" fill="#fff"/><rect x="1.5" y="8.2" width="11" height="5.4" fill="#fff"/><path d="M4.6 5.1 L6.6 2.6 L8.6 5.1 Z M4.6 9.5 L6.6 12 L8.6 9.5 Z" fill="#111" stroke="#111" stroke-width="0.4" stroke-linejoin="round"/></svg></div>
<div class="sp" style="left:1052px;top:466.8px"><span>00:00</span><svg class="a" style="left:49px;top:-0.5px" width="14" height="16" viewBox="0 0 14 16"><rect x="0.2" y="0.5" width="13.3" height="15" fill="#e4e4e4"/><rect x="1.5" y="1.2" width="11" height="6" fill="#fff"/><rect x="1.5" y="8.2" width="11" height="5.4" fill="#fff"/><path d="M4.6 5.1 L6.6 2.6 L8.6 5.1 Z M4.6 9.5 L6.6 12 L8.6 9.5 Z" fill="#111" stroke="#111" stroke-width="0.4" stroke-linejoin="round"/></svg></div>
<div class="sp" style="left:1126px;top:466.8px"><span>00:00</span><svg class="a" style="left:49px;top:-0.5px" width="14" height="16" viewBox="0 0 14 16"><rect x="0.2" y="0.5" width="13.3" height="15" fill="#e4e4e4"/><rect x="1.5" y="1.2" width="11" height="6" fill="#fff"/><rect x="1.5" y="8.2" width="11" height="5.4" fill="#fff"/><path d="M4.6 5.1 L6.6 2.6 L8.6 5.1 Z M4.6 9.5 L6.6 12 L8.6 9.5 Z" fill="#111" stroke="#111" stroke-width="0.4" stroke-linejoin="round"/></svg></div>
<svg class="a" style="left:360px;top:489.6px" width="11" height="11" viewBox="0 0 11 11"><rect x="0" y="0" width="11" height="11" rx="2.2" fill="#005fc4"/><path d="M2.7 5.6 L4.6 7.5 L8.3 3.8" fill="none" stroke="#d6e4f4" stroke-width="1.2"/></svg>
<div class="t " style="left:374px;top:490.0px;letter-spacing:-0.3px">Thursday</div>
<div class="sp" style="left:509px;top:488.2px"><span>00:00</span><svg class="a" style="left:49px;top:-0.5px" width="14" height="16" viewBox="0 0 14 16"><rect x="0.2" y="0.5" width="13.3" height="15" fill="#e4e4e4"/><rect x="1.5" y="1.2" width="11" height="6" fill="#fff"/><rect x="1.5" y="8.2" width="11" height="5.4" fill="#fff"/><path d="M4.6 5.1 L6.6 2.6 L8.6 5.1 Z M4.6 9.5 L6.6 12 L8.6 9.5 Z" fill="#111" stroke="#111" stroke-width="0.4" stroke-linejoin="round"/></svg></div>
<div class="sp" style="left:584px;top:488.2px"><span>00:00</span><svg class="a" style="left:49px;top:-0.5px" width="14" height="16" viewBox="0 0 14 16"><rect x="0.2" y="0.5" width="13.3" height="15" fill="#e4e4e4"/><rect x="1.5" y="1.2" width="11" height="6" fill="#fff"/><rect x="1.5" y="8.2" width="11" height="5.4" fill="#fff"/><path d="M4.6 5.1 L6.6 2.6 L8.6 5.1 Z M4.6 9.5 L6.6 12 L8.6 9.5 Z" fill="#111" stroke="#111" stroke-width="0.4" stroke-linejoin="round"/></svg></div>
<div class="sp" style="left:690px;top:488.2px"><span>00:00</span><svg class="a" style="left:49px;top:-0.5px" width="14" height="16" viewBox="0 0 14 16"><rect x="0.2" y="0.5" width="13.3" height="15" fill="#e4e4e4"/><rect x="1.5" y="1.2" width="11" height="6" fill="#fff"/><rect x="1.5" y="8.2" width="11" height="5.4" fill="#fff"/><path d="M4.6 5.1 L6.6 2.6 L8.6 5.1 Z M4.6 9.5 L6.6 12 L8.6 9.5 Z" fill="#111" stroke="#111" stroke-width="0.4" stroke-linejoin="round"/></svg></div>
<div class="sp" style="left:764px;top:488.2px"><span>00:00</span><svg class="a" style="left:49px;top:-0.5px" width="14" height="16" viewBox="0 0 14 16"><rect x="0.2" y="0.5" width="13.3" height="15" fill="#e4e4e4"/><rect x="1.5" y="1.2" width="11" height="6" fill="#fff"/><rect x="1.5" y="8.2" width="11" height="5.4" fill="#fff"/><path d="M4.6 5.1 L6.6 2.6 L8.6 5.1 Z M4.6 9.5 L6.6 12 L8.6 9.5 Z" fill="#111" stroke="#111" stroke-width="0.4" stroke-linejoin="round"/></svg></div>
<div class="sp" style="left:871px;top:488.2px"><span>00:00</span><svg class="a" style="left:49px;top:-0.5px" width="14" height="16" viewBox="0 0 14 16"><rect x="0.2" y="0.5" width="13.3" height="15" fill="#e4e4e4"/><rect x="1.5" y="1.2" width="11" height="6" fill="#fff"/><rect x="1.5" y="8.2" width="11" height="5.4" fill="#fff"/><path d="M4.6 5.1 L6.6 2.6 L8.6 5.1 Z M4.6 9.5 L6.6 12 L8.6 9.5 Z" fill="#111" stroke="#111" stroke-width="0.4" stroke-linejoin="round"/></svg></div>
<div class="sp" style="left:945px;top:488.2px"><span>00:00</span><svg class="a" style="left:49px;top:-0.5px" width="14" height="16" viewBox="0 0 14 16"><rect x="0.2" y="0.5" width="13.3" height="15" fill="#e4e4e4"/><rect x="1.5" y="1.2" width="11" height="6" fill="#fff"/><rect x="1.5" y="8.2" width="11" height="5.4" fill="#fff"/><path d="M4.6 5.1 L6.6 2.6 L8.6 5.1 Z M4.6 9.5 L6.6 12 L8.6 9.5 Z" fill="#111" stroke="#111" stroke-width="0.4" stroke-linejoin="round"/></svg></div>
<div class="sp" style="left:1052px;top:488.2px"><span>00:00</span><svg class="a" style="left:49px;top:-0.5px" width="14" height="16" viewBox="0 0 14 16"><rect x="0.2" y="0.5" width="13.3" height="15" fill="#e4e4e4"/><rect x="1.5" y="1.2" width="11" height="6" fill="#fff"/><rect x="1.5" y="8.2" width="11" height="5.4" fill="#fff"/><path d="M4.6 5.1 L6.6 2.6 L8.6 5.1 Z M4.6 9.5 L6.6 12 L8.6 9.5 Z" fill="#111" stroke="#111" stroke-width="0.4" stroke-linejoin="round"/></svg></div>
<div class="sp" style="left:1126px;top:488.2px"><span>00:00</span><svg class="a" style="left:49px;top:-0.5px" width="14" height="16" viewBox="0 0 14 16"><rect x="0.2" y="0.5" width="13.3" height="15" fill="#e4e4e4"/><rect x="1.5" y="1.2" width="11" height="6" fill="#fff"/><rect x="1.5" y="8.2" width="11" height="5.4" fill="#fff"/><path d="M4.6 5.1 L6.6 2.6 L8.6 5.1 Z M4.6 9.5 L6.6 12 L8.6 9.5 Z" fill="#111" stroke="#111" stroke-width="0.4" stroke-linejoin="round"/></svg></div>
<svg class="a" style="left:360px;top:511.1px" width="11" height="11" viewBox="0 0 11 11"><rect x="0" y="0" width="11" height="11" rx="2.2" fill="#005fc4"/><path d="M2.7 5.6 L4.6 7.5 L8.3 3.8" fill="none" stroke="#d6e4f4" stroke-width="1.2"/></svg>
<div class="t " style="left:374px;top:511.4px;letter-spacing:-0.3px">Friday</div>
<div class="sp" style="left:509px;top:509.6px"><span>00:00</span><svg class="a" style="left:49px;top:-0.5px" width="14" height="16" viewBox="0 0 14 16"><rect x="0.2" y="0.5" width="13.3" height="15" fill="#e4e4e4"/><rect x="1.5" y="1.2" width="11" height="6" fill="#fff"/><rect x="1.5" y="8.2" width="11" height="5.4" fill="#fff"/><path d="M4.6 5.1 L6.6 2.6 L8.6 5.1 Z M4.6 9.5 L6.6 12 L8.6 9.5 Z" fill="#111" stroke="#111" stroke-width="0.4" stroke-linejoin="round"/></svg></div>
<div class="sp" style="left:584px;top:509.6px"><span>00:00</span><svg class="a" style="left:49px;top:-0.5px" width="14" height="16" viewBox="0 0 14 16"><rect x="0.2" y="0.5" width="13.3" height="15" fill="#e4e4e4"/><rect x="1.5" y="1.2" width="11" height="6" fill="#fff"/><rect x="1.5" y="8.2" width="11" height="5.4" fill="#fff"/><path d="M4.6 5.1 L6.6 2.6 L8.6 5.1 Z M4.6 9.5 L6.6 12 L8.6 9.5 Z" fill="#111" stroke="#111" stroke-width="0.4" stroke-linejoin="round"/></svg></div>
<div class="sp" style="left:690px;top:509.6px"><span>00:00</span><svg class="a" style="left:49px;top:-0.5px" width="14" height="16" viewBox="0 0 14 16"><rect x="0.2" y="0.5" width="13.3" height="15" fill="#e4e4e4"/><rect x="1.5" y="1.2" width="11" height="6" fill="#fff"/><rect x="1.5" y="8.2" width="11" height="5.4" fill="#fff"/><path d="M4.6 5.1 L6.6 2.6 L8.6 5.1 Z M4.6 9.5 L6.6 12 L8.6 9.5 Z" fill="#111" stroke="#111" stroke-width="0.4" stroke-linejoin="round"/></svg></div>
<div class="sp" style="left:764px;top:509.6px"><span>00:00</span><svg class="a" style="left:49px;top:-0.5px" width="14" height="16" viewBox="0 0 14 16"><rect x="0.2" y="0.5" width="13.3" height="15" fill="#e4e4e4"/><rect x="1.5" y="1.2" width="11" height="6" fill="#fff"/><rect x="1.5" y="8.2" width="11" height="5.4" fill="#fff"/><path d="M4.6 5.1 L6.6 2.6 L8.6 5.1 Z M4.6 9.5 L6.6 12 L8.6 9.5 Z" fill="#111" stroke="#111" stroke-width="0.4" stroke-linejoin="round"/></svg></div>
<div class="sp" style="left:871px;top:509.6px"><span>00:00</span><svg class="a" style="left:49px;top:-0.5px" width="14" height="16" viewBox="0 0 14 16"><rect x="0.2" y="0.5" width="13.3" height="15" fill="#e4e4e4"/><rect x="1.5" y="1.2" width="11" height="6" fill="#fff"/><rect x="1.5" y="8.2" width="11" height="5.4" fill="#fff"/><path d="M4.6 5.1 L6.6 2.6 L8.6 5.1 Z M4.6 9.5 L6.6 12 L8.6 9.5 Z" fill="#111" stroke="#111" stroke-width="0.4" stroke-linejoin="round"/></svg></div>
<div class="sp" style="left:945px;top:509.6px"><span>00:00</span><svg class="a" style="left:49px;top:-0.5px" width="14" height="16" viewBox="0 0 14 16"><rect x="0.2" y="0.5" width="13.3" height="15" fill="#e4e4e4"/><rect x="1.5" y="1.2" width="11" height="6" fill="#fff"/><rect x="1.5" y="8.2" width="11" height="5.4" fill="#fff"/><path d="M4.6 5.1 L6.6 2.6 L8.6 5.1 Z M4.6 9.5 L6.6 12 L8.6 9.5 Z" fill="#111" stroke="#111" stroke-width="0.4" stroke-linejoin="round"/></svg></div>
<div class="sp" style="left:1052px;top:509.6px"><span>00:00</span><svg class="a" style="left:49px;top:-0.5px" width="14" height="16" viewBox="0 0 14 16"><rect x="0.2" y="0.5" width="13.3" height="15" fill="#e4e4e4"/><rect x="1.5" y="1.2" width="11" height="6" fill="#fff"/><rect x="1.5" y="8.2" width="11" height="5.4" fill="#fff"/><path d="M4.6 5.1 L6.6 2.6 L8.6 5.1 Z M4.6 9.5 L6.6 12 L8.6 9.5 Z" fill="#111" stroke="#111" stroke-width="0.4" stroke-linejoin="round"/></svg></div>
<div class="sp" style="left:1126px;top:509.6px"><span>00:00</span><svg class="a" style="left:49px;top:-0.5px" width="14" height="16" viewBox="0 0 14 16"><rect x="0.2" y="0.5" width="13.3" height="15" fill="#e4e4e4"/><rect x="1.5" y="1.2" width="11" height="6" fill="#fff"/><rect x="1.5" y="8.2" width="11" height="5.4" fill="#fff"/><path d="M4.6 5.1 L6.6 2.6 L8.6 5.1 Z M4.6 9.5 L6.6 12 L8.6 9.5 Z" fill="#111" stroke="#111" stroke-width="0.4" stroke-linejoin="round"/></svg></div>
<svg class="a" style="left:360px;top:532.5px" width="11" height="11" viewBox="0 0 11 11"><rect x="0" y="0" width="11" height="11" rx="2.2" fill="#005fc4"/><path d="M2.7 5.6 L4.6 7.5 L8.3 3.8" fill="none" stroke="#d6e4f4" stroke-width="1.2"/></svg>
<div class="t " style="left:374px;top:532.9px;letter-spacing:-0.3px">Saturday</div>
<div class="sp" style="left:509px;top:531.1px"><span>00:00</span><svg class="a" style="left:49px;top:-0.5px" width="14" height="16" viewBox="0 0 14 16"><rect x="0.2" y="0.5" width="13.3" height="15" fill="#e4e4e4"/><rect x="1.5" y="1.2" width="11" height="6" fill="#fff"/><rect x="1.5" y="8.2" width="11" height="5.4" fill="#fff"/><path d="M4.6 5.1 L6.6 2.6 L8.6 5.1 Z M4.6 9.5 L6.6 12 L8.6 9.5 Z" fill="#111" stroke="#111" stroke-width="0.4" stroke-linejoin="round"/></svg></div>
<div class="sp" style="left:584px;top:531.1px"><span>00:00</span><svg class="a" style="left:49px;top:-0.5px" width="14" height="16" viewBox="0 0 14 16"><rect x="0.2" y="0.5" width="13.3" height="15" fill="#e4e4e4"/><rect x="1.5" y="1.2" width="11" height="6" fill="#fff"/><rect x="1.5" y="8.2" width="11" height="5.4" fill="#fff"/><path d="M4.6 5.1 L6.6 2.6 L8.6 5.1 Z M4.6 9.5 L6.6 12 L8.6 9.5 Z" fill="#111" stroke="#111" stroke-width="0.4" stroke-linejoin="round"/></svg></div>
<div class="sp" style="left:690px;top:531.1px"><span>00:00</span><svg class="a" style="left:49px;top:-0.5px" width="14" height="16" viewBox="0 0 14 16"><rect x="0.2" y="0.5" width="13.3" height="15" fill="#e4e4e4"/><rect x="1.5" y="1.2" width="11" height="6" fill="#fff"/><rect x="1.5" y="8.2" width="11" height="5.4" fill="#fff"/><path d="M4.6 5.1 L6.6 2.6 L8.6 5.1 Z M4.6 9.5 L6.6 12 L8.6 9.5 Z" fill="#111" stroke="#111" stroke-width="0.4" stroke-linejoin="round"/></svg></div>
<div class="sp" style="left:764px;top:531.1px"><span>00:00</span><svg class="a" style="left:49px;top:-0.5px" width="14" height="16" viewBox="0 0 14 16"><rect x="0.2" y="0.5" width="13.3" height="15" fill="#e4e4e4"/><rect x="1.5" y="1.2" width="11" height="6" fill="#fff"/><rect x="1.5" y="8.2" width="11" height="5.4" fill="#fff"/><path d="M4.6 5.1 L6.6 2.6 L8.6 5.1 Z M4.6 9.5 L6.6 12 L8.6 9.5 Z" fill="#111" stroke="#111" stroke-width="0.4" stroke-linejoin="round"/></svg></div>
<div class="sp" style="left:871px;top:531.1px"><span>00:00</span><svg class="a" style="left:49px;top:-0.5px" width="14" height="16" viewBox="0 0 14 16"><rect x="0.2" y="0.5" width="13.3" height="15" fill="#e4e4e4"/><rect x="1.5" y="1.2" width="11" height="6" fill="#fff"/><rect x="1.5" y="8.2" width="11" height="5.4" fill="#fff"/><path d="M4.6 5.1 L6.6 2.6 L8.6 5.1 Z M4.6 9.5 L6.6 12 L8.6 9.5 Z" fill="#111" stroke="#111" stroke-width="0.4" stroke-linejoin="round"/></svg></div>
<div class="sp" style="left:945px;top:531.1px"><span>00:00</span><svg class="a" style="left:49px;top:-0.5px" width="14" height="16" viewBox="0 0 14 16"><rect x="0.2" y="0.5" width="13.3" height="15" fill="#e4e4e4"/><rect x="1.5" y="1.2" width="11" height="6" fill="#fff"/><rect x="1.5" y="8.2" width="11" height="5.4" fill="#fff"/><path d="M4.6 5.1 L6.6 2.6 L8.6 5.1 Z M4.6 9.5 L6.6 12 L8.6 9.5 Z" fill="#111" stroke="#111" stroke-width="0.4" stroke-linejoin="round"/></svg></div>
<div class="sp" style="left:1052px;top:531.1px"><span>00:00</span><svg class="a" style="left:49px;top:-0.5px" width="14" height="16" viewBox="0 0 14 16"><rect x="0.2" y="0.5" width="13.3" height="15" fill="#e4e4e4"/><rect x="1.5" y="1.2" width="11" height="6" fill="#fff"/><rect x="1.5" y="8.2" width="11" height="5.4" fill="#fff"/><path d="M4.6 5.1 L6.6 2.6 L8.6 5.1 Z M4.6 9.5 L6.6 12 L8.6 9.5 Z" fill="#111" stroke="#111" stroke-width="0.4" stroke-linejoin="round"/></svg></div>
<div class="sp" style="left:1126px;top:531.1px"><span>00:00</span><svg class="a" style="left:49px;top:-0.5px" width="14" height="16" viewBox="0 0 14 16"><rect x="0.2" y="0.5" width="13.3" height="15" fill="#e4e4e4"/><rect x="1.5" y="1.2" width="11" height="6" fill="#fff"/><rect x="1.5" y="8.2" width="11" height="5.4" fill="#fff"/><path d="M4.6 5.1 L6.6 2.6 L8.6 5.1 Z M4.6 9.5 L6.6 12 L8.6 9.5 Z" fill="#111" stroke="#111" stroke-width="0.4" stroke-linejoin="round"/></svg></div>
<div class="a" style="left:1279px;top:58px;width:1px;height:620px;background:rgba(255,255,255,0.4)"></div>
<div class="a" style="left:176px;top:58px;width:1px;height:620px;background:rgba(255,255,255,0.18)"></div>
<div class="a" style="left:176px;top:86px;width:1104px;height:1px;background:rgba(255,255,255,0.3)"></div>
</div>
<!--/MAIN-->
</body></html>
